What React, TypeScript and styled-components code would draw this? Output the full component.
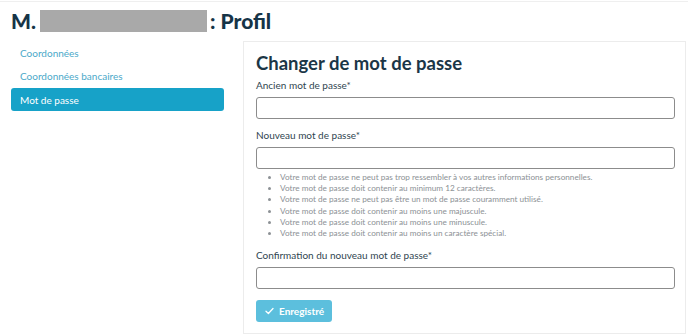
import React from "react";
import styled, { createGlobalStyle } from "styled-components";

const Global = createGlobalStyle`
  html, body { margin: 0; padding: 0; background: #ffffff; }
  body { font-family: Lato, "Liberation Sans", sans-serif; }
  * { box-sizing: border-box; }
`;

const Page = styled.div`
  border-top: 1px solid #efefef;
  margin-top: 1px;
  padding: 0 2px 0 11px;
  height: 333px;
  display: flex;
  flex-direction: column;
`;

const Title = styled.h1`
  margin: 0;
  height: 39px;
  padding-bottom: 2px;
  display: flex;
  align-items: center;
  gap: 3px;
  font-size: 21px;
  font-weight: 900;
  color: #163447;
  letter-spacing: 0;
`;

const Redacted = styled.span`
  display: inline-block;
  width: 167px;
  height: 22px;
  margin-left: 1px;
  background: #a9a9a9;
`;

const Body = styled.div`
  flex: 1;
  display: grid;
  grid-template-columns: 213px 1fr;
  column-gap: 19px;
`;

const Nav = styled.nav`
  display: flex;
  flex-direction: column;
  gap: 0.5px;
`;

const NavItem = styled.a<{ $active?: boolean }>`
  display: flex;
  align-items: center;
  height: 23px;
  padding-left: 9px;
  font-size: 10px;
  color: ${(p) => (p.$active ? "#ffffff" : "#4ba9c9")};
  background: ${(p) => (p.$active ? "#17a2c8" : "transparent")};
  border-radius: 3px;
  text-decoration: none;
`;

const Panel = styled.section`
  border: 1px solid #ececec;
  padding: 9px 10px 0 12px;
`;

const Heading = styled.h2`
  margin: 0;
  font-size: 18.5px;
  line-height: 24px;
  font-weight: 700;
  color: #1b3647;
`;

const Label = styled.label<{ $mt: number }>`
  display: block;
  margin-top: ${(p) => p.$mt}px;
  font-size: 10px;
  line-height: 14px;
  color: #2f4550;
`;

const Input = styled.input`
  display: block;
  width: 100%;
  height: 22px;
  margin-top: 5px;
  border: 1px solid #8c8c8c;
  border-radius: 3px;
  background: #fff;
`;

const Rules = styled.ul`
  margin: 3px 0 0;
  padding-left: 24px;
  font-size: 8.2px;
  line-height: 11.2px;
  color: #8c9195;
`;

const Button = styled.button`
  margin-top: 11px;
  display: inline-flex;
  align-items: center;
  gap: 5px;
  height: 22px;
  padding: 0 8px 0 9px;
  border: none;
  border-radius: 3px;
  background: #5cbfdd;
  color: #ffffff;
  font-family: inherit;
  font-size: 10px;
  font-weight: 700;
`;

const rules = [
  "Votre mot de passe ne peut pas trop ressembler à vos autres informations personnelles.",
  "Votre mot de passe doit contenir au minimum 12 caractères.",
  "Votre mot de passe ne peut pas être un mot de passe couramment utilisé.",
  "Votre mot de passe doit contenir au moins une majuscule.",
  "Votre mot de passe doit contenir au moins une minuscule.",
  "Votre mot de passe doit contenir au moins un caractère spécial.",
];

export default function App() {
  return (
    <>
      <Global />
      <Page>
        <Title>
          M.<Redacted /> : Profil
        </Title>
        <Body>
          <Nav>
            <NavItem>Coordonnées</NavItem>
            <NavItem>Coordonnées bancaires</NavItem>
            <NavItem $active>Mot de passe</NavItem>
          </Nav>
          <Panel>
            <Heading>Changer de mot de passe</Heading>
            <Label $mt={3}>Ancien mot de passe*</Label>
            <Input type="password" />
            <Label $mt={9}>Nouveau mot de passe*</Label>
            <Input type="password" />
            <Rules>
              {rules.map((r) => (
                <li key={r}>{r}</li>
              ))}
            </Rules>
            <Label $mt={9}>Confirmation du nouveau mot de passe*</Label>
            <Input type="password" />
            <Button>
              <svg width="9" height="8" viewBox="0 0 9 8">
                <path d="M1 4.2 L3.4 6.5 L8 1.5" fill="none" stroke="#fff" strokeWidth="1.3" strokeLinecap="round" strokeLinejoin="round" />
              </svg>
              Enregistré
            </Button>
          </Panel>
        </Body>
      </Page>
    </>
  );
}
